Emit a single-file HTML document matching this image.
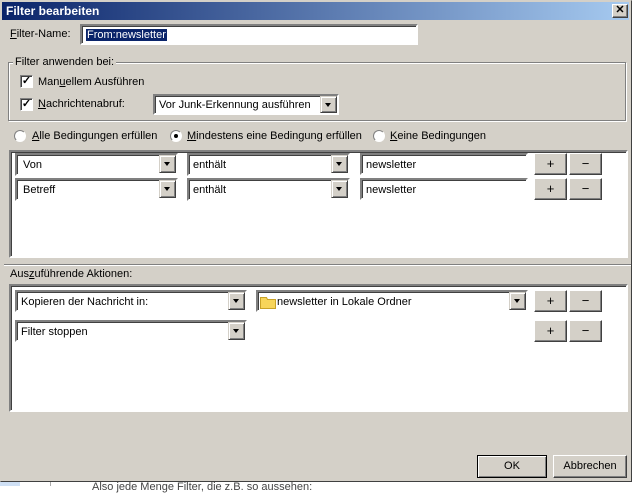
<!DOCTYPE html><html><head><style>
*{box-sizing:border-box;margin:0;padding:0}
body{width:632px;height:486px;background:#fff;font-family:"Liberation Sans",sans-serif;font-size:11px;color:#000;position:relative;overflow:hidden}
.a{position:absolute}
.win{left:0;top:0;width:632px;height:482px;background:#d4d0c8;border:1px solid #404040;border-top-color:#d4d0c8;border-left-color:#d4d0c8}
.title{left:2px;top:2px;width:627px;height:18px;background:linear-gradient(90deg,#0a246a,#a6caf0);color:#fff;font-weight:bold;font-size:12px;padding:2px 4px}
.sunk{background:#fff;border:2px solid;border-color:#808080 #fff #fff #808080;box-shadow:inset 1px 1px 0 #404040}
.btn{background:#d4d0c8;border:1px solid;border-color:#fff #404040 #404040 #fff;box-shadow:inset -1px -1px 0 #808080;text-align:center}
.sel .t{position:absolute;left:4px;top:4px;white-space:nowrap}
.arr{position:absolute;right:0;top:0;width:17px;height:18px;background:#d4d0c8;border:1px solid;border-color:#d4d0c8 #404040 #404040 #d4d0c8;box-shadow:inset 1px 1px 0 #fff,inset -1px -1px 0 #808080}
.arr:after{content:"";position:absolute;left:4px;top:6px;border:3.5px solid transparent;border-top:4px solid #000;border-bottom:0}
.cb{width:13px;height:13px;background:#fff;border:1px solid;border-color:#808080 #fff #fff #808080;box-shadow:inset 1px 1px 0 #404040;font-size:11px;line-height:11px;text-align:center;font-weight:bold}
.rd{width:12px;height:12px;border-radius:50%;background:#fff;border:1px solid #808080;border-right-color:#fff;border-bottom-color:#fff}
.grp{border:1px solid #808080;box-shadow:1px 1px 0 #fff,inset 1px 1px 0 #fff}
u{text-decoration:underline}
</style></head><body>
<div class="a win"></div>
<div class="a title">Filter bearbeiten</div>
<div class="a btn" style="left:612px;top:4px;width:16px;height:14px;font-size:11px;line-height:11px;font-weight:bold">✕</div>
<div class="a" style="left:10px;top:28px"><u>F</u>ilter-Name:</div>
<div class="a sunk" style="left:80px;top:24px;width:338px;height:21px"><span class="a" style="left:4px;top:3px;background:#0a246a;color:#fff;padding:0 1px">From:newsletter</span></div>
<div class="a grp" style="left:8px;top:62px;width:618px;height:59px"></div>
<div class="a" style="left:13px;top:56px;background:#d4d0c8;padding:0 2px">Filter anwenden bei:</div>
<div class="a cb" style="left:20px;top:75px">✓</div><div class="a" style="left:38px;top:76px">Man<u>u</u>ellem Ausführen</div>
<div class="a cb" style="left:20px;top:98px">✓</div><div class="a" style="left:38px;top:98px"><u>N</u>achrichtenabruf:</div>
<div class="a sunk sel" style="left:153px;top:94px;width:186px;height:21px"><span class="t" style="top:3px">Vor Junk-Erkennung ausführen</span><div class="arr" style="height:17px"></div></div>
<div class="a rd" style="left:14px;top:130px"></div><div class="a" style="left:32px;top:130px"><u>A</u>lle Bedingungen erfüllen</div>
<div class="a rd" style="left:170px;top:130px"><div class="a" style="left:3px;top:3px;width:4px;height:4px;background:#000;border-radius:50%"></div></div><div class="a" style="left:187px;top:130px"><u>M</u>indestens eine Bedingung erfüllen</div>
<div class="a rd" style="left:373px;top:130px"></div><div class="a" style="left:390px;top:130px"><u>K</u>eine Bedingungen</div>
<div class="a sunk" style="left:9px;top:150px;width:619px;height:108px"></div>
<div class="a sunk sel" style="left:15px;top:153px;width:163px;height:23px"><span class="t" style="left:6px">Von</span><div class="arr"></div></div>
<div class="a sunk sel" style="left:187px;top:153px;width:163px;height:23px"><span class="t">enthält</span><div class="arr"></div></div>
<div class="a sunk" style="left:360px;top:153px;width:168px;height:22px"><span class="a" style="left:4px;top:4px">newsletter</span></div>
<div class="a btn" style="left:534px;top:153px;width:33px;height:22px;line-height:20px;font-size:13px">+</div>
<div class="a btn" style="left:569px;top:153px;width:33px;height:22px;line-height:20px;font-size:13px">−</div>
<div class="a sunk sel" style="left:15px;top:178px;width:163px;height:23px"><span class="t" style="left:6px">Betreff</span><div class="arr"></div></div>
<div class="a sunk sel" style="left:187px;top:178px;width:163px;height:23px"><span class="t">enthält</span><div class="arr"></div></div>
<div class="a sunk" style="left:360px;top:178px;width:168px;height:22px"><span class="a" style="left:4px;top:4px">newsletter</span></div>
<div class="a btn" style="left:534px;top:178px;width:33px;height:22px;line-height:20px;font-size:13px">+</div>
<div class="a btn" style="left:569px;top:178px;width:33px;height:22px;line-height:20px;font-size:13px">−</div>
<div class="a" style="left:4px;top:264px;width:627px;height:2px;border-top:1px solid #808080;border-bottom:1px solid #fff"></div>
<div class="a" style="left:10px;top:268px">Aus<u>z</u>uführende Aktionen:</div>
<div class="a sunk" style="left:9px;top:284px;width:619px;height:128px"></div>
<div class="a sunk sel" style="left:15px;top:290px;width:232px;height:22px"><span class="t">Kopieren der Nachricht in:</span><div class="arr"></div></div>
<div class="a sunk sel" style="left:256px;top:290px;width:272px;height:22px"><svg class="a" style="left:2px;top:3px" width="16" height="14"><path d="M0.5 2.5h6l1 2h8v9h-15z" fill="#f7d55a" stroke="#c9a227"/></svg><span class="t" style="left:19px">newsletter in Lokale Ordner</span><div class="arr"></div></div>
<div class="a btn" style="left:534px;top:290px;width:33px;height:22px;line-height:20px;font-size:13px">+</div>
<div class="a btn" style="left:569px;top:290px;width:33px;height:22px;line-height:20px;font-size:13px">−</div>
<div class="a sunk sel" style="left:15px;top:320px;width:232px;height:22px"><span class="t">Filter stoppen</span><div class="arr"></div></div>
<div class="a btn" style="left:534px;top:320px;width:33px;height:22px;line-height:20px;font-size:13px">+</div>
<div class="a btn" style="left:569px;top:320px;width:33px;height:22px;line-height:20px;font-size:13px">−</div>
<div class="a btn" style="left:477px;top:455px;width:70px;height:23px;line-height:21px;border:1px solid #000;box-shadow:inset 1px 1px 0 #fff,inset -1px -1px 0 #808080">OK</div>
<div class="a btn" style="left:553px;top:455px;width:74px;height:23px;line-height:21px">Abbrechen</div>
<div class="a" style="left:0;top:482px;width:20px;height:4px;background:#cfe0f5"></div>
<div class="a" style="left:50px;top:482px;width:1px;height:4px;background:#aaa"></div>
<div class="a" style="left:92px;top:482px;font-size:11px;line-height:11px;color:#444">Also jede Menge Filter, die z.B. so aussehen:</div>
</body></html>
